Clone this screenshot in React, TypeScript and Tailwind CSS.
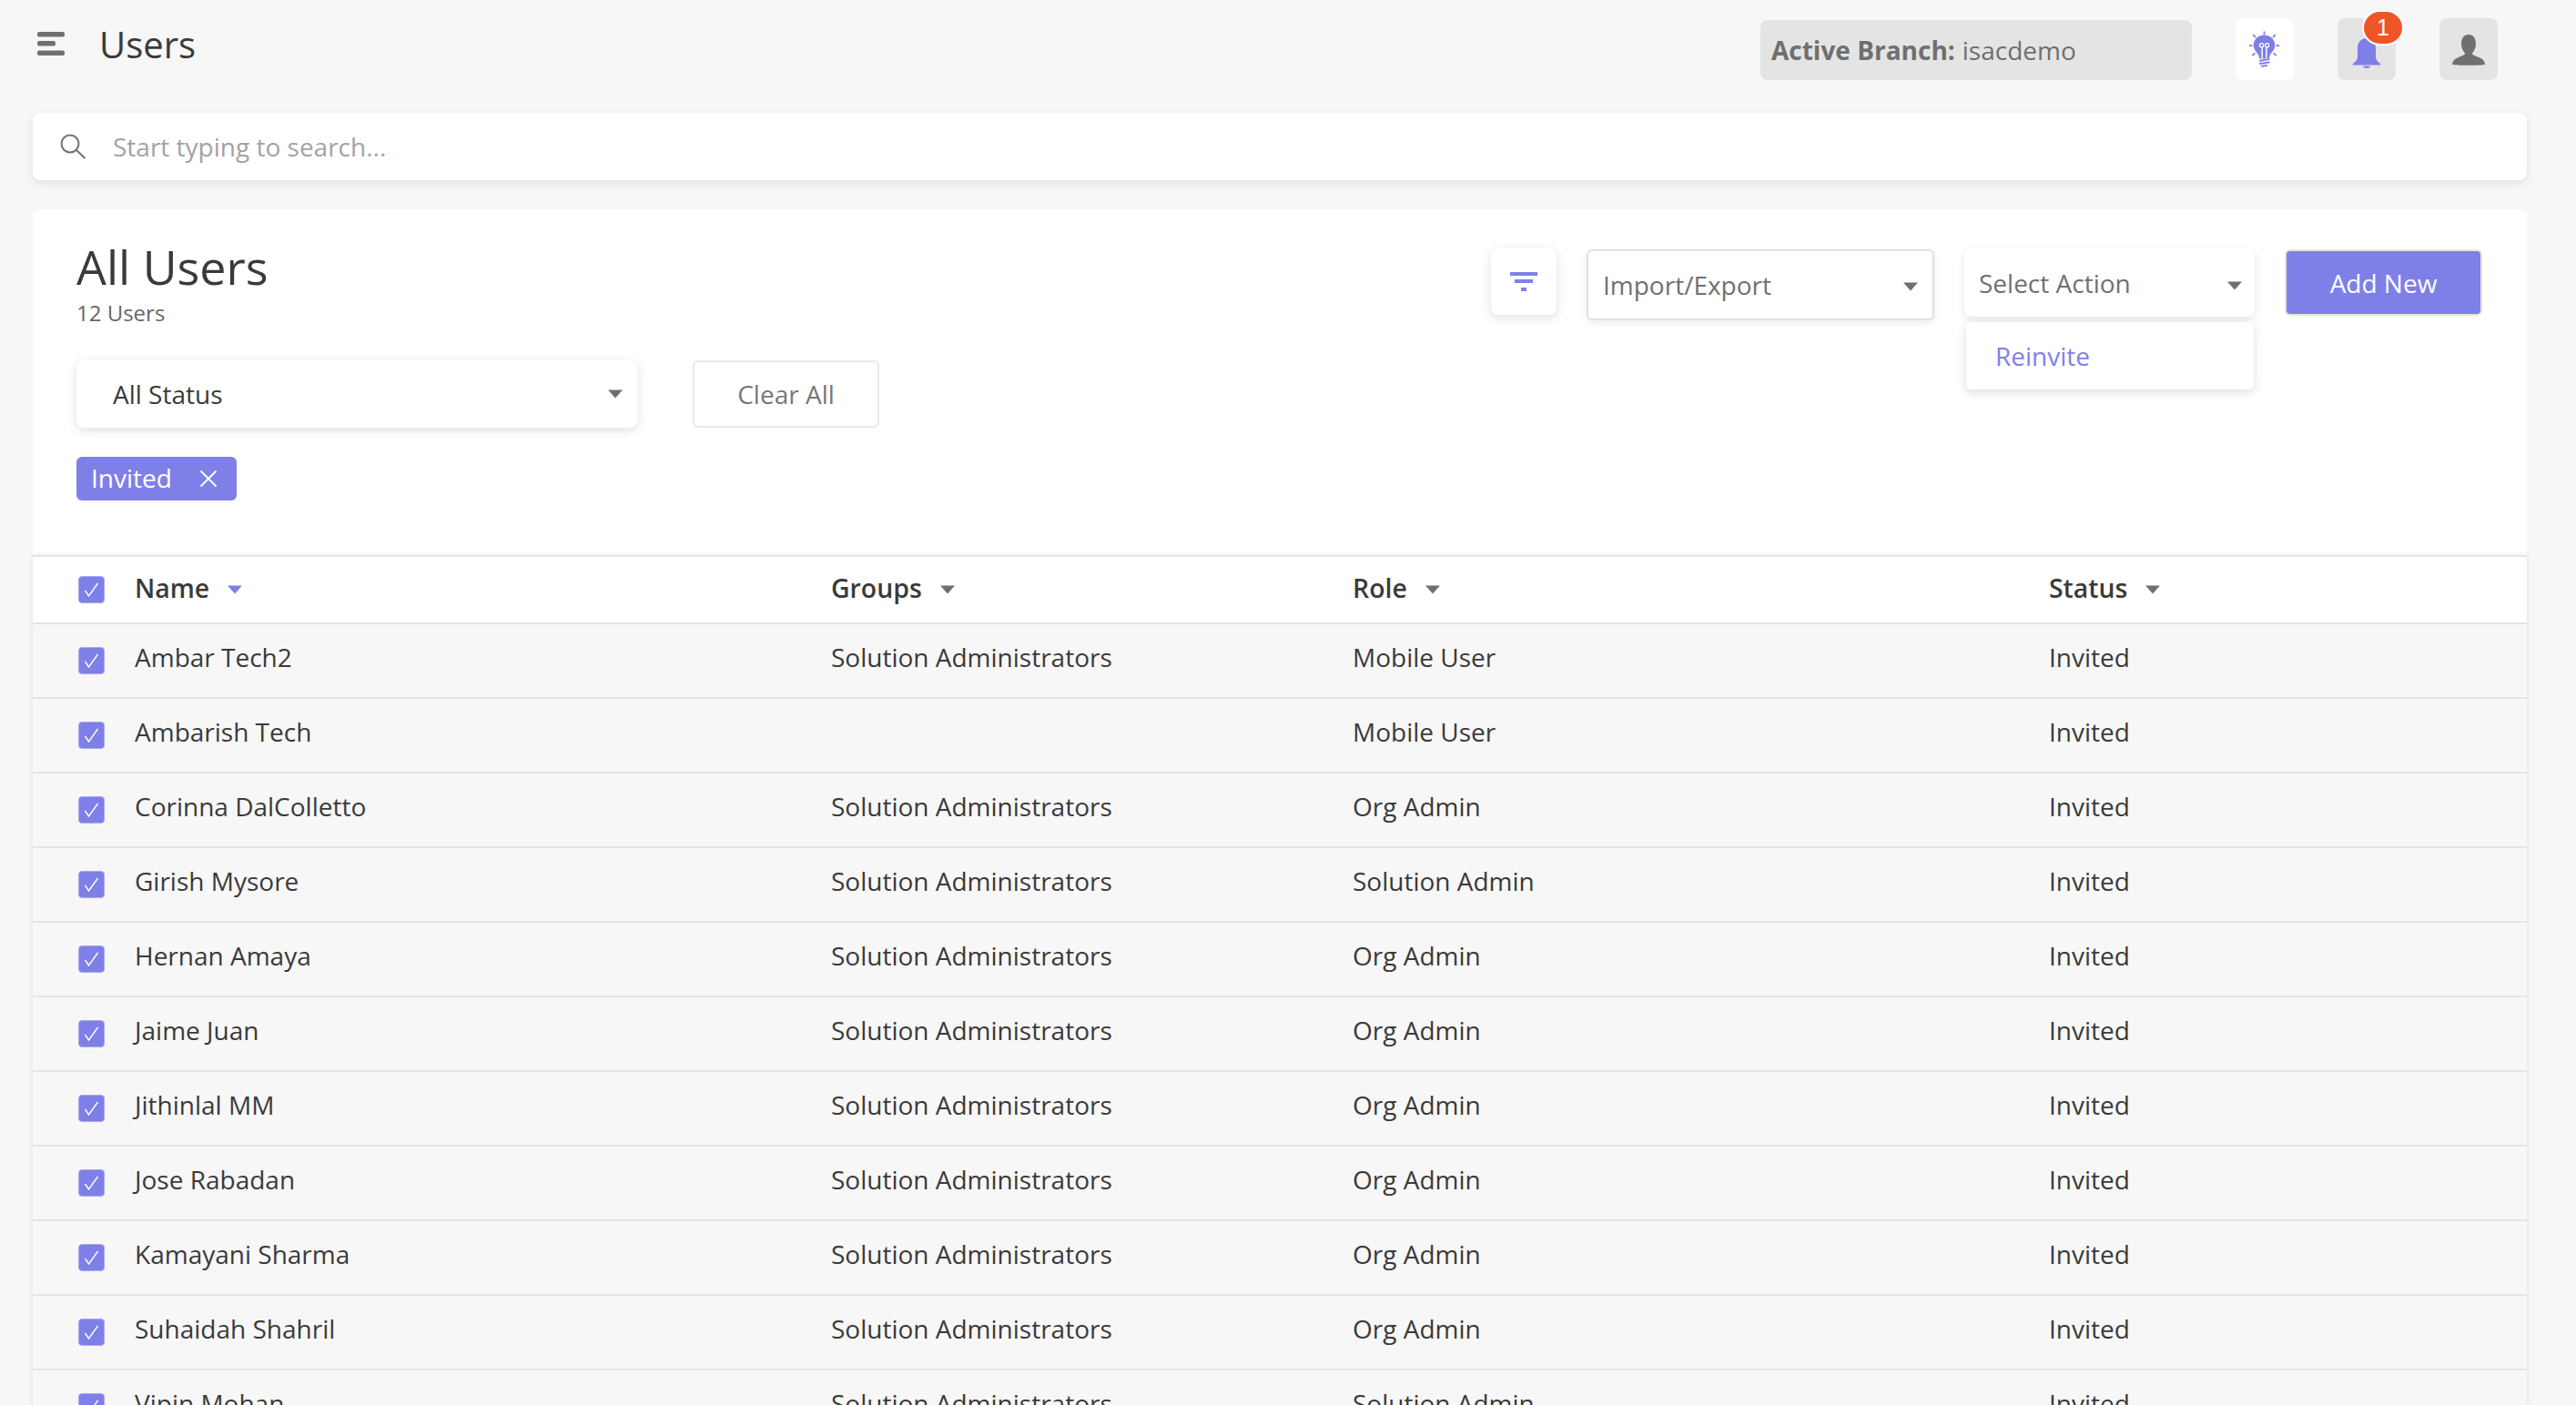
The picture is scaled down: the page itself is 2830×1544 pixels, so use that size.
import React from "react";

const rows: [string, string, string][] = [
  ["Ambar Tech2", "Solution Administrators", "Mobile User"],
  ["Ambarish Tech", "", "Mobile User"],
  ["Corinna DalColletto", "Solution Administrators", "Org Admin"],
  ["Girish Mysore", "Solution Administrators", "Solution Admin"],
  ["Hernan Amaya", "Solution Administrators", "Org Admin"],
  ["Jaime Juan", "Solution Administrators", "Org Admin"],
  ["Jithinlal MM", "Solution Administrators", "Org Admin"],
  ["Jose Rabadan", "Solution Administrators", "Org Admin"],
  ["Kamayani Sharma", "Solution Administrators", "Org Admin"],
  ["Suhaidah Shahril", "Solution Administrators", "Org Admin"],
  ["Vipin Mohan", "Solution Administrators", "Solution Admin"],
];

function Arrow({ purple = false }: { purple?: boolean }) {
  return (
    <svg width="16" height="10" viewBox="0 0 16 10" className="shrink-0">
      <path d="M0 0.5H16L8 9.5Z" fill={purple ? "#7f7fe8" : "#6f6f6f"} />
    </svg>
  );
}

function Check() {
  return (
    <span className="w-[29px] h-[30px] rounded-[4px] bg-[#7f7fe8] border border-[#a9a9f0] flex items-center justify-center shrink-0">
      <svg width="17" height="16" viewBox="0 0 17 16" fill="none">
        <path d="M1.5 9L5.5 15L15.5 1" stroke="#fff" strokeWidth="1.4" />
      </svg>
    </span>
  );
}

const gridCols = "grid grid-cols-[62px_765px_573px_765px_1fr] pl-[50px] items-center";

export default function App() {
  return (
    <div className="w-full h-[1544px] overflow-hidden bg-[#f7f7f7] font-['Open_Sans',sans-serif] text-[#3a3a3a]">
      <header className="h-[124px] flex items-start pl-[41px] pr-[86px]">
        <svg width="30" height="26" viewBox="0 0 30 26" className="mt-[35px]">
          <rect x="0" y="0" width="30" height="5.5" rx="2" fill="#707070" />
          <rect x="0" y="10" width="20" height="5.5" rx="2" fill="#707070" />
          <rect x="0" y="20.5" width="30" height="5.5" rx="2" fill="#707070" />
        </svg>
        <h1 className="ml-[38px] mt-[22px] text-[40px] leading-[54px] font-normal">Users</h1>
        <div className="ml-auto mt-[22px] w-[474px] h-[66px] rounded-[8px] bg-[#e4e4e4] flex items-center pl-[12px] text-[28px] text-[#6f6f6f]">
          <span className="font-bold">Active Branch:</span>
          <span className="ml-[8px]">isacdemo</span>
        </div>
        <button className="ml-[48px] mt-[20px] w-[64px] h-[68px] rounded-[8px] bg-white flex items-center justify-center">
          <svg width="34" height="40" viewBox="0 0 36 42">
            <g stroke="#7f7fe8" strokeWidth="1.8" strokeLinecap="round">
              <path d="M17.5 1V3.5" />
              <path d="M5 4.5L7 6.8" />
              <path d="M30 4.5L28 6.8" />
              <path d="M0.8 17H3" />
              <path d="M32 17H34.5" />
              <path d="M4 28L6.3 26" />
              <path d="M31 28L28.7 26" />
            </g>
            <path d="M17.5 4.5C10 4.5 5 10 5 16.5C5 21.5 8.5 24 10.5 27.5C11.3 29 11.8 30 11.8 32H23.2C23.2 30 23.7 29 24.5 27.5C26.5 24 30 21.5 30 16.5C30 10 25 4.5 17.5 4.5Z" fill="#7f7fe8" />
            <path d="M15 18.5V32M20 18.5V32" stroke="#fff" strokeWidth="1.5" fill="none" />
            <circle cx="14.3" cy="16.5" r="2.2" fill="none" stroke="#fff" strokeWidth="1.3" />
            <circle cx="20.7" cy="16.5" r="2.2" fill="none" stroke="#fff" strokeWidth="1.3" />
            <path d="M12.5 34.5L23 32.8M12.5 38L23 36.3M14.5 41L20.5 40" stroke="#7f7fe8" strokeWidth="2" strokeLinecap="round" />
          </svg>
        </button>
        <button className="relative ml-[48px] mt-[20px] w-[64px] h-[68px] rounded-[8px] bg-[#e4e4e4] flex items-center justify-center">
          <svg width="32" height="33" viewBox="0 0 32 33" className="mt-[9px]">
            <path d="M16 0C10 0 6 4.5 6 11V20C6 24 3.5 26 1 28C0.3 28.6 0.5 29.5 1.5 29.5H30.5C31.5 29.5 31.7 28.6 31 28C28.5 26 26 24 26 20V11C26 4.5 22 0 16 0Z" fill="#7f7fe8" />
            <path d="M12 30.5H20C20 32 18 33 16 33C14 33 12 32 12 30.5Z" fill="#7f7fe8" />
          </svg>
          <span className="absolute left-[27px] top-[-9px] w-[46px] h-[39px] rounded-full bg-[#f05527] border-2 border-white flex items-center justify-center text-white text-[25px] font-['Liberation_Sans',sans-serif]">
            1
          </span>
        </button>
        <button className="ml-[48px] mt-[20px] w-[64px] h-[68px] rounded-[8px] bg-[#e4e4e4] flex items-center justify-center">
          <svg width="36" height="34" viewBox="0 0 36 34" className="mt-[2px]">
            <path d="M18 0C13 0 10 4 10 10C10 14 11.5 18 14 20.5C14 22 13 22.5 8 24.5C3 26.5 0.5 28 0 33C4 34 32 34 36 33C35.5 28 33 26.5 28 24.5C23 22.5 22 22 22 20.5C24.5 18 26 14 26 10C26 4 23 0 18 0Z" fill="#707070" />
          </svg>
        </button>
      </header>

      <div className="ml-[36px] mr-[54px] h-[74px] rounded-[8px] bg-white shadow-[0_3px_10px_rgba(0,0,0,0.1)] flex items-center pl-[30px]">
        <svg width="29" height="28" viewBox="0 0 29 28" fill="none" className="mt-[-1px]">
          <circle cx="11" cy="11" r="9.5" stroke="#707070" strokeWidth="2" />
          <path d="M18 18L27.5 27" stroke="#707070" strokeWidth="2" />
        </svg>
        <span className="ml-[29px] text-[28px] text-[#a3a3a3]">Start typing to search...</span>
      </div>

      <main className="ml-[36px] mr-[54px] mt-[32px] bg-white rounded-t-[8px]">
        <section className="relative h-[380px] flex justify-between pl-[48px] pr-[49px]">
          <div className="pt-[33px]">
            <h2 className="text-[52px] leading-[60px] font-normal">All Users</h2>
            <p className="mt-[6px] text-[24px] leading-[30px] text-[#666]">12 Users</p>
            <div className="mt-[37px] flex items-start">
              <div className="w-[616px] h-[74px] rounded-[8px] bg-white shadow-[0_3px_12px_rgba(0,0,0,0.12)] flex items-center justify-between pl-[40px] pr-[16px] text-[28px]">
                <span>All Status</span>
                <Arrow />
              </div>
              <button className="ml-[61px] w-[205px] h-[74px] rounded-[6px] border-2 border-[#e8e8e8] text-[28px] text-[#777]">Clear All</button>
            </div>
            <div className="mt-[32px] inline-flex items-center w-[176px] h-[48px] rounded-[6px] bg-[#7f7fe8] pl-[16px] text-white text-[28px]">
              <span className="mt-[-3px]">Invited</span>
              <svg width="20" height="20" viewBox="0 0 20 20" className="ml-[30px]">
                <path d="M1.5 1.5L18.5 18.5M18.5 1.5L1.5 18.5" stroke="#fff" strokeWidth="2" />
              </svg>
            </div>
          </div>

          <div className="pt-[43px] flex items-start">
            <button className="w-[72px] h-[73px] rounded-[8px] bg-white shadow-[0_3px_12px_rgba(0,0,0,0.12)] flex items-center justify-center">
              <svg width="30" height="21" viewBox="0 0 30 21">
                <rect x="0" y="0" width="30" height="4" fill="#7f7fe8" />
                <rect x="5" y="8" width="20" height="4" fill="#7f7fe8" />
                <rect x="12" y="17" width="6" height="4" fill="#7f7fe8" />
              </svg>
            </button>
            <div className="ml-[33px] mt-[1px] w-[382px] h-[78px] rounded-[6px] bg-white border-2 border-[#e0e0e0] shadow-[0_3px_10px_rgba(0,0,0,0.08)] flex items-center justify-between pt-[4px] pl-[16px] pr-[16px] text-[28px] text-[#707070]">
              <span className="mt-[-5px]">Import/Export</span>
              <Arrow />
            </div>
            <div className="relative ml-[33px] w-[319px] h-[75px] rounded-[8px] bg-white shadow-[0_3px_10px_rgba(0,0,0,0.1)] flex items-center justify-between pt-[6px] pl-[16px] pr-[14px] text-[28px] text-[#707070]">
              <span className="mt-[-6px]">Select Action</span>
              <Arrow />
              <div className="absolute left-[2px] top-[81px] w-[316px] h-[74px] rounded-[6px] bg-white shadow-[0_3px_12px_rgba(0,0,0,0.14)] flex items-center pl-[32px] text-[#7f7fe8]">
                Reinvite
              </div>
            </div>
            <button className="ml-[33px] mt-[1px] w-[217px] h-[73px] rounded-[6px] bg-[#7f7fe8] border-2 border-[#e4e4e4] text-white text-[28px]">Add New</button>
          </div>
        </section>

        <section className="shadow-[0_0_6px_rgba(0,0,0,0.1)]">
          <div className={`${gridCols} h-[76px] bg-white border-y-2 border-[#e4e4e4] text-[28.4px] font-semibold`}>
            <Check />
            <div className="flex items-center gap-[20px]"><span className="mt-[-3px]">Name</span><Arrow purple /></div>
            <div className="flex items-center gap-[20px]"><span className="mt-[-3px]">Groups</span><Arrow /></div>
            <div className="flex items-center gap-[20px]"><span className="mt-[-3px]">Role</span><Arrow /></div>
            <div className="flex items-center gap-[20px]"><span className="mt-[-3px]">Status</span><Arrow /></div>
          </div>
          {rows.map((r) => (
            <div key={r[0]} className={`${gridCols} h-[82px] bg-[#f7f7f7] border-b-2 border-[#e4e4e4] text-[28px]`}>
              <Check />
              <span className="mt-[-9px]">{r[0]}</span>
              <span className="mt-[-9px]">{r[1]}</span>
              <span className="mt-[-9px]">{r[2]}</span>
              <span className="mt-[-9px]">Invited</span>
            </div>
          ))}
        </section>
      </main>
    </div>
  );
}
